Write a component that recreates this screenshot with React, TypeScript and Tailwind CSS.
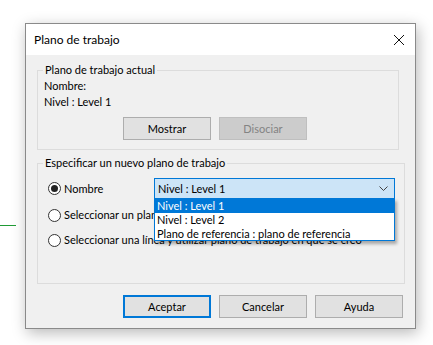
export default function App() {
  const font = { fontFamily: 'Lato, "Noto Sans", sans-serif' };

  return (
    <div
      className="relative w-[433px] h-[345px] bg-white text-[11px] leading-[16px] text-black overflow-hidden"
      style={font}
    >
      {/* green guide line behind the dialog */}
      <div className="absolute left-0 top-[225px] w-[16px] h-px bg-[#1f9a35]" />

      {/* DIALOG */}
      <div className="ml-[25px] mt-[23px] w-[391px] border border-[#8a8a8a] bg-[#f0f0f0] shadow-[2px_4px_14px_rgba(0,0,0,0.28)]">
        {/* TITLE BAR */}
        <div className="flex items-center justify-between h-[31px] bg-white pl-[8px] pr-[9px]">
          <span className="text-[12px]">Plano de trabajo</span>
          <svg width="12" height="12" viewBox="0 0 12 12" className="mr-[1px]">
            <path d="M1 1 L11 11 M11 1 L1 11" stroke="#111" strokeWidth="1" />
          </svg>
        </div>

        {/* BODY */}
        <div className="pl-[11px] pt-[7px] pb-[10px]">
          {/* CURRENT WORK PLANE */}
          <fieldset className="w-[362px] border border-[#dcdcdc] pl-[5px] pb-[9px]">
            <legend className="px-[2px]">Plano de trabajo actual</legend>
            <div className="pl-[1px]">
              <div>Nombre:</div>
              <div>Nivel : Level 1</div>
            </div>
            <div className="flex gap-[8px] ml-[80px] mt-[7px]">
              <button className="w-[88px] h-[23px] border border-[#adadad] bg-[#e1e1e1]">
                Mostrar
              </button>
              <button className="w-[88px] h-[23px] border border-[#bfbfbf] bg-[#cccccc] text-[#838383]">
                Disociar
              </button>
            </div>
          </fieldset>

          {/* NEW WORK PLANE */}
          <fieldset className="w-[368px] mt-[5px] border border-[#dcdcdc] pl-[5px] pb-[35px]">
            <legend className="px-[2px]">Especificar un nuevo plano de trabajo</legend>

            <div className="flex items-center mt-[7px]">
              <div className="flex items-center w-[111px] pl-[5px] gap-[3px]">
                <span className="flex items-center justify-center w-[13px] h-[13px] rounded-full border border-[#333] bg-white">
                  <span className="w-[7px] h-[7px] rounded-full bg-[#222]" />
                </span>
                <span>Nombre</span>
              </div>

              {/* COMBOBOX */}
              <div className="relative">
                <div className="flex items-center justify-between w-[241px] h-[21px] border border-[#0078d7] bg-[#cce4f7] pl-[3px] pr-[6px]">
                  <span>Nivel : Level 1</span>
                  <svg width="9" height="6" viewBox="0 0 9 6">
                    <path d="M0.5 0.5 L4.5 4.5 L8.5 0.5" fill="none" stroke="#444" strokeWidth="1" />
                  </svg>
                </div>
                <div className="absolute left-0 top-[20px] w-[241px] border border-[#0078d7] bg-white shadow-[2px_3px_3px_rgba(0,0,0,0.3)] z-10">
                  <div className="h-[14px] leading-[14px] pl-[2px] bg-[#0078d7] text-white">Nivel : Level 1</div>
                  <div className="h-[14px] leading-[14px] pl-[2px]">Nivel : Level 2</div>
                  <div className="h-[13px] leading-[13px] pl-[2px] whitespace-nowrap">Plano de referencia : plano de referencia</div>
                </div>
              </div>
            </div>

            <div className="flex items-center pl-[5px] gap-[3px] mt-[8px]">
              <span className="w-[13px] h-[13px] rounded-full border border-[#333] bg-white" />
              <span>Seleccionar un plano</span>
            </div>

            <div className="flex items-center pl-[5px] gap-[3px] mt-[9px]">
              <span className="shrink-0 w-[13px] h-[13px] rounded-full border border-[#333] bg-white" />
              <span className="whitespace-nowrap">Seleccionar una línea y utilizar plano de trabajo en que se creó</span>
            </div>
          </fieldset>

          {/* FOOTER BUTTONS */}
          <div className="flex gap-[8px] ml-[86px] mt-[11px]">
            <button className="w-[88px] h-[23px] border-2 border-[#0078d7] bg-[#e1e1e1]">
              Aceptar
            </button>
            <button className="w-[88px] h-[23px] border border-[#adadad] bg-[#e1e1e1]">
              Cancelar
            </button>
            <button className="w-[88px] h-[23px] border border-[#adadad] bg-[#e1e1e1]">
              Ayuda
            </button>
          </div>
        </div>
      </div>
    </div>
  );
}
